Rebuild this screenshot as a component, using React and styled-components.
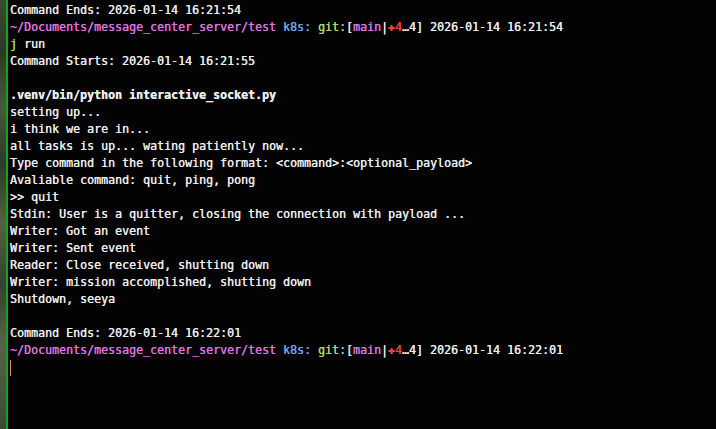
import React from 'react'
import styled, { createGlobalStyle } from 'styled-components'

const GlobalStyle = createGlobalStyle`
  html, body {
    margin: 0;
    padding: 0;
    background: #000;
  }
  #root {
    width: 716px;
    height: 429px;
    overflow: hidden;
  }
`

const Screen = styled.div`
  display: flex;
  width: 716px;
  height: 429px;
  background: #030303;
`

const Backdrop = styled.div`
  width: 6px;
  flex: none;
  background: linear-gradient(
    180deg,
    #3d4a2c 0%,
    #2a3a22 12%,
    #4b5a36 25%,
    #2c3b24 38%,
    #56603c 52%,
    #34422a 66%,
    #5a6242 80%,
    #3a4a30 100%
  );
`

const Edge = styled.div`
  width: 2px;
  flex: none;
  background: #17a21b;
`

const Pane = styled.div`
  flex: 1;
  padding: 2px 0 0 2px;
  font-family: 'DejaVu Sans Mono', 'Liberation Mono', monospace;
  font-size: 11.63px;
  color: #ececec;
  white-space: pre;
  text-shadow: 0.35px 0 0 currentColor;
`

const Line = styled.div`
  height: 17px;
  line-height: 17px;
  font-weight: ${(p) => (p.$bold ? 700 : 400)};
`

const Seg = styled.span`
  color: ${(p) => p.$c || 'inherit'};
  font-weight: ${(p) => (p.$heavy ? 700 : 'inherit')};
`

const Cursor = styled.div`
  width: 1px;
  height: 16px;
  margin-top: 1px;
  background: #e39a55;
`

const C = {
  path: '#df73de',
  k8s: '#6fa6ee',
  git: '#a6df6a',
  red: '#e5483c',
  prompt: '#a6df5f',
}

const Prompt = ({ time }) => (
  <Line>
    <Seg $c={C.path}>~/Documents/message_center_server/test</Seg>{' '}
    <Seg $c={C.k8s}>k8s:</Seg>{' '}
    <Seg $c={C.git}>git:</Seg>[<Seg $c={C.path}>main</Seg>|
    <Seg $c={C.red} $heavy>✚</Seg>
    <Seg $c={C.red}>4</Seg>…4] {time}
  </Line>
)

const output = [
  'setting up...',
  'i think we are in...',
  'all tasks is up... wating patiently now...',
  'Type command in the following format: <command>:<optional_payload>',
  'Avaliable command: quit, ping, pong',
  '>> quit',
  'Stdin: User is a quitter, closing the connection with payload ...',
  'Writer: Got an event',
  'Writer: Sent event',
  'Reader: Close received, shutting down',
  'Writer: mission accomplished, shutting down',
  'Shutdown, seeya',
]

export default function App() {
  return (
    <>
      <GlobalStyle />
      <Screen>
        <Backdrop />
        <Edge />
        <Pane>
          <Line>Command Ends: 2026-01-14 16:21:54</Line>
          <Prompt time="2026-01-14 16:21:54" />
          <Line>
            <Seg $c={C.prompt}>j</Seg> run
          </Line>
          <Line>Command Starts: 2026-01-14 16:21:55</Line>
          <Line />
          <Line $bold>.venv/bin/python interactive_socket.py</Line>
          {output.map((t, i) => (
            <Line key={i}>{t}</Line>
          ))}
          <Line />
          <Line>Command Ends: 2026-01-14 16:22:01</Line>
          <Prompt time="2026-01-14 16:22:01" />
          <Cursor />
        </Pane>
      </Screen>
    </>
  )
}
